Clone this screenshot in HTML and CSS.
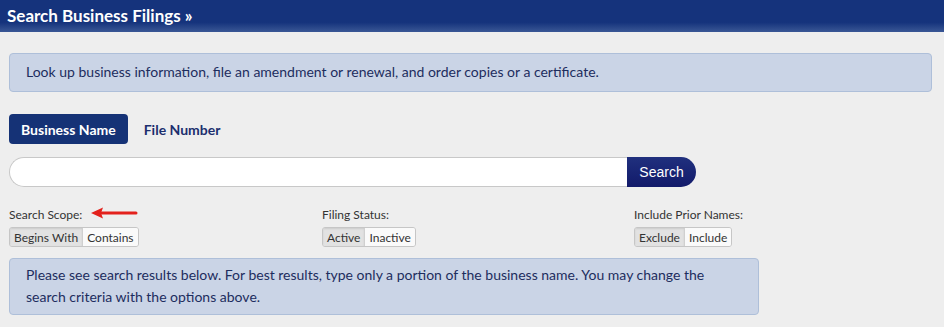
FILE: index.html
```html
<!DOCTYPE html>
<html lang="en">
<head>
  <meta charset="UTF-8" />
  <title>Search Business Filings</title>
  <link rel="stylesheet" href="styles.css">
</head>
<body>
  <div class="page-title">Search Business Filings &raquo;</div>

  <div class="content">
    <div class="info-box">Look up business information, file an amendment or renewal, and order copies or a certificate.</div>

    <div class="tabs">
      <button type="button" class="tab active">Business Name</button>
      <button type="button" class="tab">File Number</button>
    </div>

    <div class="search-row">
      <input type="text" class="search-input" />
      <button type="button" class="search-btn">Search</button>
    </div>

    <div class="options">
      <div class="option">
        <div class="option-label">
          Search Scope:
          <svg class="arrow" width="48" height="12" viewBox="0 0 48 12">
            <path d="M10 6 H46" stroke="#e3211c" stroke-width="3" stroke-linecap="round"/>
            <path d="M1 6 L13 0.5 L11 6 L13 11.5 Z" fill="#e3211c"/>
          </svg>
        </div>
        <div class="btn-group">
          <button type="button" class="seg on">Begins With</button>
          <button type="button" class="seg">Contains</button>
        </div>
      </div>
      <div class="option">
        <div class="option-label">Filing Status:</div>
        <div class="btn-group">
          <button type="button" class="seg on">Active</button>
          <button type="button" class="seg">Inactive</button>
        </div>
      </div>
      <div class="option">
        <div class="option-label">Include Prior Names:</div>
        <div class="btn-group">
          <button type="button" class="seg on">Exclude</button>
          <button type="button" class="seg">Include</button>
        </div>
      </div>
    </div>

    <div class="info-box results-note">Please see search results below. For best results, type only a portion of the business name. You may change the search criteria with the options above.</div>
  </div>
</body>
</html>
```

FILE: styles.css
```css
body {
  margin: 0;
  background: #eeeeee;
  font-family: Lato, "Open Sans", sans-serif;
  color: #333;
}
.page-title {
  height: 32px;
  line-height: 31px;
  padding-left: 7px;
  background: linear-gradient(#15337c 0%, #15337c 70%, #3a5795 100%);
  color: #fff;
  font-size: 17px;
  font-weight: bold;
}
.content {
  padding: 21px 12px 0 9px;
}
.info-box {
  background: #cad4e6;
  border: 1px solid #aebfd9;
  border-radius: 4px;
  color: #1d2d5e;
  font-size: 14px;
  line-height: 22px;
  padding: 7px 16px 8px;
}
.tabs {
  display: flex;
  align-items: center;
  margin-top: 22px;
}
.tab {
  font-family: Lato, sans-serif;
  font-size: 14px;
  font-weight: bold;
  height: 30px;
  padding: 0 12px;
  border: none;
  border-radius: 4px;
  background: transparent;
  color: #1c2f6e;
  margin-right: 4px;
}
.tab.active {
  background: #153276;
  color: #fff;
}
.search-row {
  display: flex;
  margin-top: 13px;
}
.search-input {
  box-sizing: border-box;
  width: 618px;
  height: 30px;
  border: 1px solid #c8c8c8;
  border-right: none;
  border-radius: 15px 0 0 15px;
  background: #fff;
  margin: 0;
}
.search-btn {
  height: 30px;
  width: 69px;
  border: none;
  border-radius: 0 15px 15px 0;
  background: linear-gradient(#20307e, #121a6a);
  color: #fff;
  font-family: "Liberation Sans", Arial, sans-serif;
  font-size: 14px;
  padding: 0;
}
.options {
  display: grid;
  grid-template-columns: 313px 312px 1fr;
  margin-top: 19px;
}
.option-label {
  display: flex;
  align-items: center;
  font-size: 12px;
  height: 16px;
  color: #333;
}
.arrow {
  margin-left: 8px;
  margin-top: -2px;
}
.btn-group {
  display: inline-flex;
  margin-top: 5px;
  border: 1px solid #c6c6c6;
  border-radius: 3px;
  overflow: hidden;
}
.seg {
  font-family: Lato, sans-serif;
  font-size: 12px;
  height: 18px;
  padding: 0 4px;
  border: none;
  background: #fafafa;
  color: #333;
}
.seg.on {
  background: #e2e2e2;
  border-right: 1px solid #d0d0d0;
  box-shadow: inset 0 1px 2px rgba(0,0,0,0.1);
}
.results-note {
  width: 716px;
  margin-top: 11px;
  padding: 5px 16px 6px;
}
```
